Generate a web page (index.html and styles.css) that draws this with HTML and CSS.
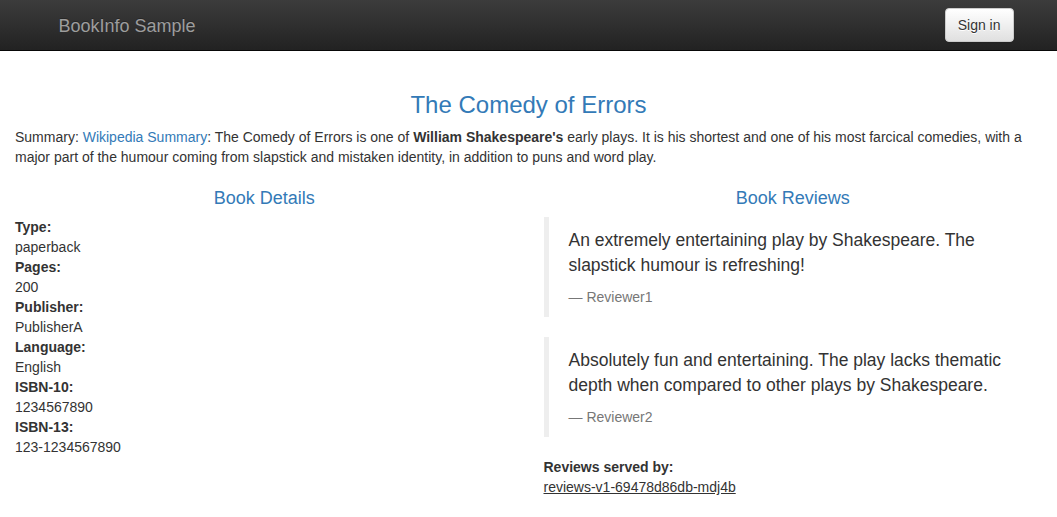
FILE: index.html
```html
<!DOCTYPE html>
<html>
<head>
<meta charset="utf-8">
<title>Simple Bookstore App</title>
<link rel="stylesheet" href="styles.css">
</head>
<body>
<nav class="navbar">
  <div class="nav-container">
    <a class="brand" href="#">BookInfo Sample</a>
    <button class="btn" type="button">Sign in</button>
  </div>
</nav>
<main class="page">
  <h3 class="title">The Comedy of Errors</h3>
  <p class="summary">Summary: <a href="#">Wikipedia Summary</a>: The Comedy of Errors is one of <b>William Shakespeare's</b> early plays. It is his shortest and one of his most farcical comedies, with a major part of the humour coming from slapstick and mistaken identity, in addition to puns and word play.</p>
  <div class="row">
    <section class="col">
      <h4 class="col-title">Book Details</h4>
      <dl class="details">
        <dt>Type:</dt><dd>paperback</dd>
        <dt>Pages:</dt><dd>200</dd>
        <dt>Publisher:</dt><dd>PublisherA</dd>
        <dt>Language:</dt><dd>English</dd>
        <dt>ISBN-10:</dt><dd>1234567890</dd>
        <dt>ISBN-13:</dt><dd>123-1234567890</dd>
      </dl>
    </section>
    <section class="col">
      <h4 class="col-title">Book Reviews</h4>
      <blockquote class="review">
        <p>An extremely entertaining play by Shakespeare. The slapstick humour is refreshing!</p>
        <small>Reviewer1</small>
      </blockquote>
      <blockquote class="review">
        <p>Absolutely fun and entertaining. The play lacks thematic depth when compared to other plays by Shakespeare.</p>
        <small>Reviewer2</small>
      </blockquote>
      <dl class="details">
        <dt>Reviews served by:</dt>
        <dd><u>reviews-v1-69478d86db-mdj4b</u></dd>
      </dl>
    </section>
  </div>
</main>
</body>
</html>
```
FILE: styles.css
```css
* { box-sizing: border-box; }
html, body { margin: 0; padding: 0; }
body {
  font-family: "Liberation Sans", Arial, Helvetica, sans-serif;
  font-size: 14px;
  line-height: 1.42857143;
  color: #333;
  background: #fff;
}
a { color: #337ab7; text-decoration: none; }

.navbar {
  height: 51px;
  margin-bottom: 20px;
  background-color: #222;
  background-image: linear-gradient(to bottom, #3c3c3c 0, #222 100%);
  border-bottom: 1px solid #080808;
}
.nav-container {
  width: 970px;
  margin: 0 auto;
  display: flex;
  justify-content: space-between;
  align-items: flex-start;
  height: 50px;
}
.brand {
  padding: 16px 15px 14px 15px;
  font-size: 18px;
  line-height: 20px;
  color: #9d9d9d;
  text-shadow: 0 -1px 0 rgba(0,0,0,.25);
}
.btn {
  margin-top: 8px;
  padding: 6px 12px;
  font-family: inherit;
  font-size: 14px;
  line-height: 20px;
  color: #333;
  border: 1px solid #ccc;
  border-radius: 4px;
  background-color: #fff;
  background-image: linear-gradient(to bottom, #fff 0, #e0e0e0 100%);
  text-shadow: 0 1px 0 #fff;
  box-shadow: inset 0 1px 0 rgba(255,255,255,.15), 0 1px 1px rgba(0,0,0,.075);
  cursor: pointer;
}

.page { padding: 0 15px; display: flow-root; }
.title {
  margin: 21px 0 9px;
  font-size: 24px;
  font-weight: 500;
  line-height: 1.1;
  text-align: center;
  color: #337ab7;
}
.summary { margin: 0 0 10px; }

.row {
  display: grid;
  grid-template-columns: 1fr 1fr;
  column-gap: 30px;
}
.col-title {
  margin: 12px 0 8px;
  font-size: 18px;
  font-weight: 500;
  line-height: 1.1;
  text-align: center;
  color: #337ab7;
}
.details { margin: 0 0 20px; }
.details dt { font-weight: 700; }
.details dd { margin: 0; }

.review {
  margin: 0 0 20px;
  padding: 11px 20px 10px;
  border-left: 5px solid #eee;
  font-size: 17.5px;
}
.review p { margin: 0 0 9px; }
.review small {
  display: block;
  font-size: 80%;
  line-height: 1.42857143;
  color: #777;
}
.review small::before { content: "\2014 \00A0"; }
```
